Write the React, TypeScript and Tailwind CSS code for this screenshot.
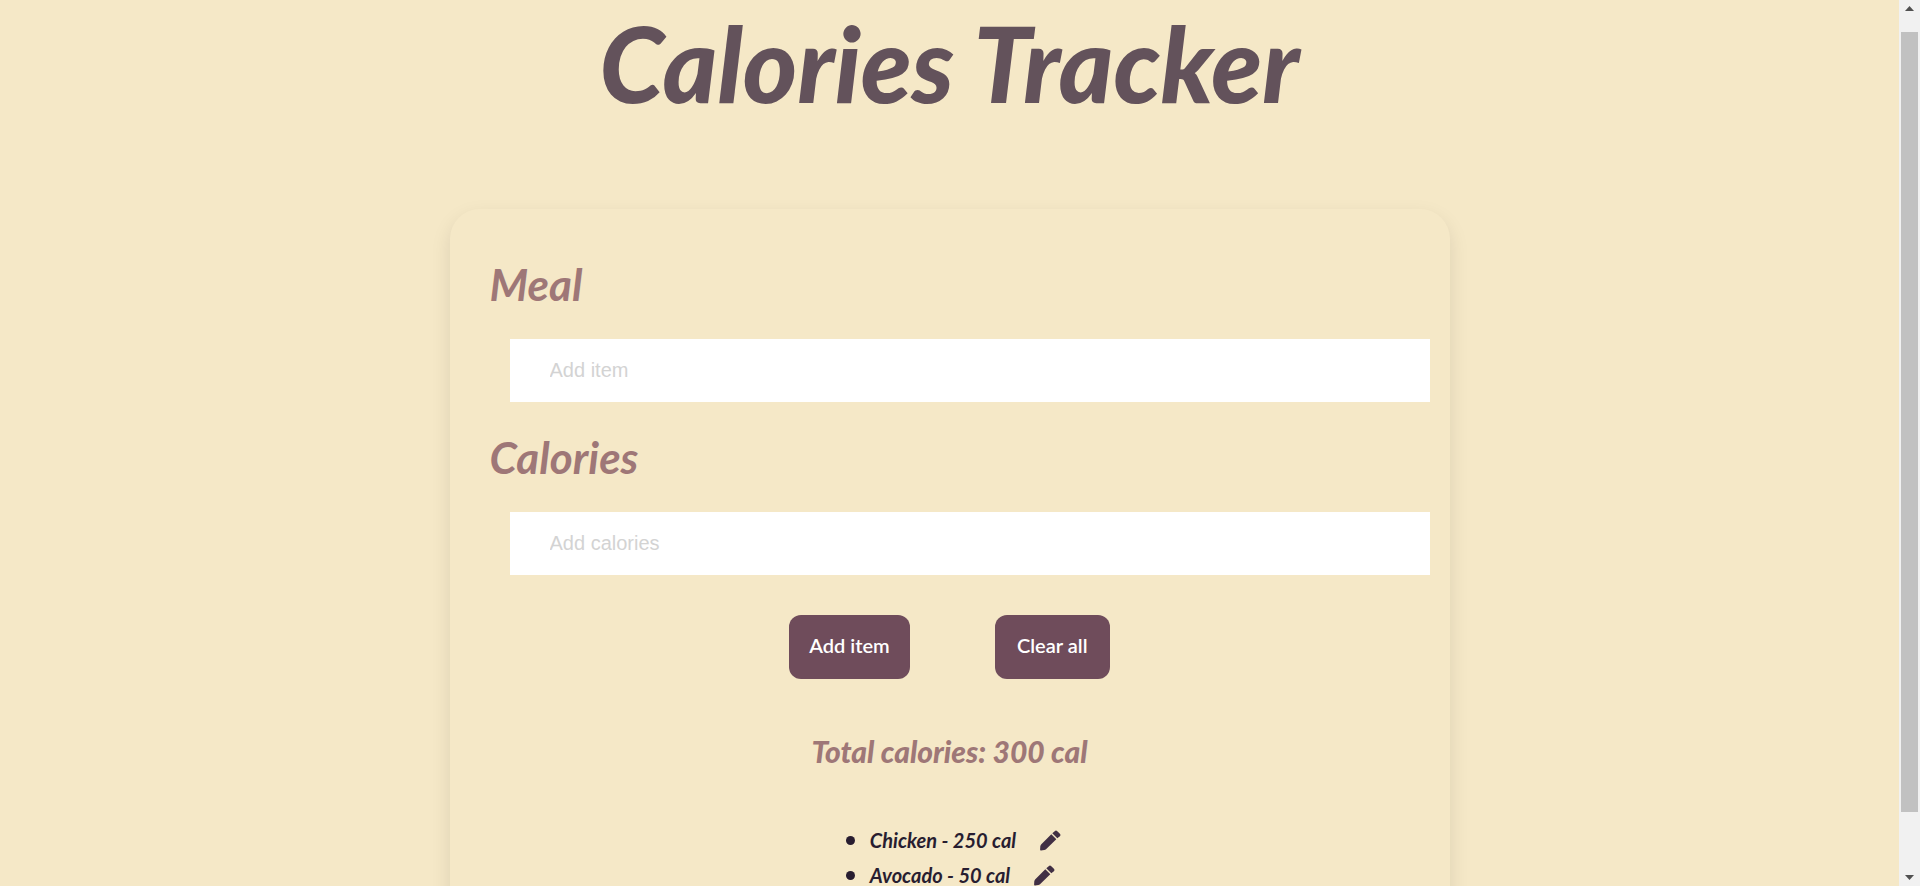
import { useState } from "react";

type Item = { name: string; calories: number };

const script = "font-['Lato','Noto_Sans',sans-serif] italic";
const button =
  "h-16 min-w-[115px] rounded-xl bg-[#6f4c5b] px-5 pb-1 font-['Lato',sans-serif] text-xl font-semibold text-white";

function PencilIcon() {
  return (
    <svg className="size-[21px]" viewBox="0 0 21 21" fill="currentColor" aria-hidden="true">
      <path d="M11.300 4.200 16.300 9.200 6 19.300Q5.300 19.900 4.300 20L1 20.500Q0 20.600.1 19.600L.3 16.300Q.4 15.200 1.100 14.400z" />
      <path d="M12.300 3.300 14.700 1.200Q16 0 17.300 1.200L19.900 3.800Q21.100 5.100 19.900 6.300L17.300 8.300z" />
    </svg>
  );
}

function Field({ id, label, placeholder }: { id: string; label: string; placeholder: string }) {
  return (
    <div className="pt-3">
      <label htmlFor={id} className={`${script} block pl-10 text-[44px] leading-[86px] font-bold text-[#9e7777]`}>
        {label}
      </label>
      <div className="pr-5 pl-[60px]">
        <input
          id={id}
          placeholder={placeholder}
          className="mt-3 block h-[63px] w-full bg-white px-10 font-['Liberation_Sans',sans-serif] text-xl text-[#281d30] outline-none placeholder:text-[#d3d3d3]"
        />
      </div>
    </div>
  );
}

function ScrollBar() {
  return (
    <div aria-hidden="true" className="flex w-[21px] shrink-0 flex-col items-center bg-[#f1f1f1]">
      <svg className="h-8 w-[17px] shrink-0" viewBox="0 0 17 32" fill="#505050">
        <path d="M4 11h9L8.500 6z" />
      </svg>
      <div className="w-[17px] grow-[780] bg-[#c1c1c1]" />
      <div className="grow-[56]" />
      <svg className="h-[18px] w-[17px] shrink-0" viewBox="0 0 17 18" fill="#505050">
        <path d="M4 7h9l-4.500 5z" />
      </svg>
    </div>
  );
}

export default function App() {
  const [items, setItems] = useState<Item[]>([
    { name: "Chicken", calories: 250 },
    { name: "Avocado", calories: 50 },
  ]);
  const total = items.reduce((sum, item) => sum + item.calories, 0);

  return (
    <div className="flex h-screen overflow-hidden bg-[#f5e8c7]">
      <main className="min-w-0 flex-1 overflow-hidden">
        <h1 className={`${script} h-[209px] text-center text-[104px] leading-[125px] font-black text-[#63525b]`}>
          Calories Tracker
        </h1>
        <form
          onSubmit={(e) => e.preventDefault()}
          className="mx-auto max-w-[1000px] rounded-[30px] pt-5 pb-24 shadow-[0_8px_20px_rgba(0,0,0,0.1)]"
        >
          <Field id="meal" label="Meal" placeholder="Add item" />
          <Field id="calories" label="Calories" placeholder="Add calories" />
          <div className="mt-10 flex justify-center gap-[85px]">
            <button type="submit" className={button}>Add item</button>
            <button type="button" className={button} onClick={() => setItems([])}>Clear all</button>
          </div>
          <h2 className={`${script} mt-10 text-center text-[30px] leading-[64px] font-black text-[#9e7777]`}>
            Total calories: {total} cal
          </h2>
          <ul className={`${script} mx-auto mt-10 w-fit pl-2 text-xl leading-[35px] font-bold text-[#281d30]`}>
            {items.map((item) => (
              <li key={item.name} className="flex items-center">
                <span className="mr-[15px] size-[9px] rounded-full bg-[#281d30]" />
                {item.name} - {item.calories} cal
                <button type="button" aria-label={`Edit ${item.name}`} className="ml-6 text-[#412f44]">
                  <PencilIcon />
                </button>
              </li>
            ))}
          </ul>
        </form>
      </main>
      <ScrollBar />
    </div>
  );
}
